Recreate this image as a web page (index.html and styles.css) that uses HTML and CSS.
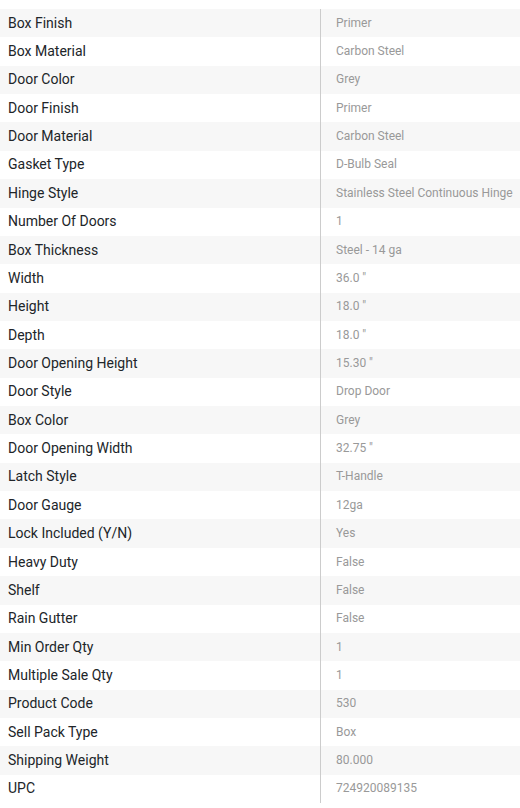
FILE: index.html
```html
<!DOCTYPE html>
<html>
<head>
<meta charset="utf-8">
<link rel="stylesheet" href="styles.css">
</head>
<body>
<div class="specs">
  <div class="row"><div class="k">Box Finish</div><div class="v">Primer</div></div>
  <div class="row"><div class="k">Box Material</div><div class="v">Carbon Steel</div></div>
  <div class="row"><div class="k">Door Color</div><div class="v">Grey</div></div>
  <div class="row"><div class="k">Door Finish</div><div class="v">Primer</div></div>
  <div class="row"><div class="k">Door Material</div><div class="v">Carbon Steel</div></div>
  <div class="row"><div class="k">Gasket Type</div><div class="v">D-Bulb Seal</div></div>
  <div class="row"><div class="k">Hinge Style</div><div class="v">Stainless Steel Continuous Hinge</div></div>
  <div class="row"><div class="k">Number Of Doors</div><div class="v">1</div></div>
  <div class="row"><div class="k">Box Thickness</div><div class="v">Steel - 14 ga</div></div>
  <div class="row"><div class="k">Width</div><div class="v">36.0 "</div></div>
  <div class="row"><div class="k">Height</div><div class="v">18.0 "</div></div>
  <div class="row"><div class="k">Depth</div><div class="v">18.0 "</div></div>
  <div class="row"><div class="k">Door Opening Height</div><div class="v">15.30 "</div></div>
  <div class="row"><div class="k">Door Style</div><div class="v">Drop Door</div></div>
  <div class="row"><div class="k">Box Color</div><div class="v">Grey</div></div>
  <div class="row"><div class="k">Door Opening Width</div><div class="v">32.75 "</div></div>
  <div class="row"><div class="k">Latch Style</div><div class="v">T-Handle</div></div>
  <div class="row"><div class="k">Door Gauge</div><div class="v">12ga</div></div>
  <div class="row"><div class="k">Lock Included (Y/N)</div><div class="v">Yes</div></div>
  <div class="row"><div class="k">Heavy Duty</div><div class="v">False</div></div>
  <div class="row"><div class="k">Shelf</div><div class="v">False</div></div>
  <div class="row"><div class="k">Rain Gutter</div><div class="v">False</div></div>
  <div class="row"><div class="k">Min Order Qty</div><div class="v">1</div></div>
  <div class="row"><div class="k">Multiple Sale Qty</div><div class="v">1</div></div>
  <div class="row"><div class="k">Product Code</div><div class="v">530</div></div>
  <div class="row"><div class="k">Sell Pack Type</div><div class="v">Box</div></div>
  <div class="row"><div class="k">Shipping Weight</div><div class="v">80.000</div></div>
  <div class="row"><div class="k">UPC</div><div class="v">724920089135</div></div>
</div>
</body>
</html>
```
FILE: styles.css
```css
html, body {
  margin: 0;
  padding: 0;
  background: #ffffff;
}
body {
  font-family: Roboto, "Liberation Sans", sans-serif;
  padding-top: 9px;
}
.specs {
  display: flex;
  flex-direction: column;
  width: 520px;
}
.row {
  display: grid;
  grid-template-columns: 320px 200px;
  height: 28.36px;
}
.row:nth-child(odd) {
  background: #f7f7f7;
}
.k {
  display: flex;
  align-items: center;
  padding-left: 8px;
  padding-bottom: 1px;
  font-size: 14px;
  color: #212529;
}
.v {
  display: flex;
  align-items: center;
  padding-left: 15px;
  padding-bottom: 1px;
  border-left: 1px solid #cccccc;
  font-size: 12px;
  color: #999999;
  white-space: nowrap;
}
```
